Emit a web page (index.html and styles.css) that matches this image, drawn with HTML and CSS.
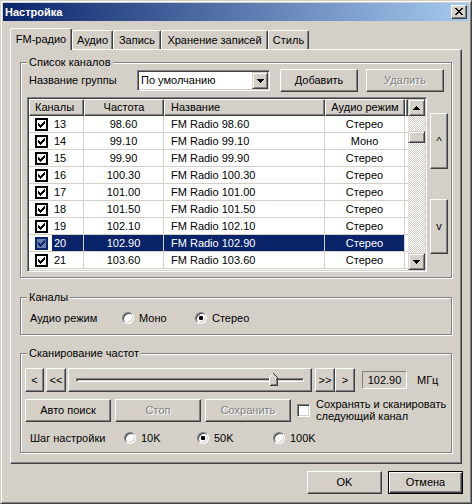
FILE: index.html
```html
<!DOCTYPE html>
<html lang="ru">
<head>
<meta charset="utf-8">
<title>Настройка</title>
<link rel="stylesheet" href="styles.css">
</head>
<body>
<div class="window">
  <div class="titlebar">
    <span class="title">Настройка</span>
    <span class="close"><svg width="8" height="7" viewBox="0 0 8 7" shape-rendering="crispEdges"><path d="M0 0h2v1H0z M6 0h2v1H6z M1 1h2v1H1z M5 1h2v1H5z M2 2h4v1H2z M3 3h2v1H3z M2 4h4v1H2z M1 5h2v1H1z M5 5h2v1H5z M0 6h2v1H0z M6 6h2v1H6z" fill="#000"/></svg></span>
  </div>
  <div class="content">
    <div class="tabs">
      <div class="tab selected t1">FM-радио</div>
      <div class="tab t2">Аудио</div>
      <div class="tab t3">Запись</div>
      <div class="tab t4">Хранение записей</div>
      <div class="tab t5">Стиль</div>
    </div>
    <div class="panel">
      <div class="group g-list">
        <span class="legend">Список каналов</span>
        <div class="row-group">
          <span class="lbl-group">Название группы</span>
          <div class="combo">
            <span class="combo-text">По умолчанию</span>
            <span class="sbb dd"><svg width="7" height="4" viewBox="0 0 7 4" shape-rendering="crispEdges"><path d="M0 0h7v1H6v1H5v1H4v1H3V3H2V2H1V1H0z" fill="#000"/></svg></span>
          </div>
          <button class="btn btn-add">Добавить</button>
          <button class="btn btn-del disabled">Удалить</button>
        </div>
        <div class="list-row">
          <div class="listview">
            <div class="lv-main">
              <div class="lv-head">
                <div class="hc hc-left">Каналы</div>
                <div class="hc hc-center">Частота</div>
                <div class="hc hc-left hc-name">Название</div>
                <div class="hc hc-center">Аудио режим</div>
                <div class="hc hc-fill"></div>
              </div>
              <div class="lv-body">
                <div class="lv-row">
                  <div class="c c-ch"><svg class="cb" width="13" height="13" viewBox="0 0 13 13" shape-rendering="crispEdges"><rect class="cb-frame" width="13" height="13"/><rect class="cb-bg" x="2" y="2" width="9" height="9"/><path class="cb-mark" d="M9 3h1v1H9z M8 4h2v1H8z M3 5h1v1H3z M7 5h3v1H7z M3 6h2v1H3z M6 6h3v1H6z M3 7h5v1H3z M4 8h3v1H4z M5 9h1v1H5z"/></svg><span class="num">13</span></div>
                  <div class="c c-center">98.60</div><div class="c c-name">FM Radio 98.60</div><div class="c c-center">Стерео</div><div class="c c-fill"></div>
                </div>
                <div class="lv-row">
                  <div class="c c-ch"><svg class="cb" width="13" height="13" viewBox="0 0 13 13" shape-rendering="crispEdges"><rect class="cb-frame" width="13" height="13"/><rect class="cb-bg" x="2" y="2" width="9" height="9"/><path class="cb-mark" d="M9 3h1v1H9z M8 4h2v1H8z M3 5h1v1H3z M7 5h3v1H7z M3 6h2v1H3z M6 6h3v1H6z M3 7h5v1H3z M4 8h3v1H4z M5 9h1v1H5z"/></svg><span class="num">14</span></div>
                  <div class="c c-center">99.10</div><div class="c c-name">FM Radio 99.10</div><div class="c c-center">Моно</div><div class="c c-fill"></div>
                </div>
                <div class="lv-row">
                  <div class="c c-ch"><svg class="cb" width="13" height="13" viewBox="0 0 13 13" shape-rendering="crispEdges"><rect class="cb-frame" width="13" height="13"/><rect class="cb-bg" x="2" y="2" width="9" height="9"/><path class="cb-mark" d="M9 3h1v1H9z M8 4h2v1H8z M3 5h1v1H3z M7 5h3v1H7z M3 6h2v1H3z M6 6h3v1H6z M3 7h5v1H3z M4 8h3v1H4z M5 9h1v1H5z"/></svg><span class="num">15</span></div>
                  <div class="c c-center">99.90</div><div class="c c-name">FM Radio 99.90</div><div class="c c-center">Стерео</div><div class="c c-fill"></div>
                </div>
                <div class="lv-row">
                  <div class="c c-ch"><svg class="cb" width="13" height="13" viewBox="0 0 13 13" shape-rendering="crispEdges"><rect class="cb-frame" width="13" height="13"/><rect class="cb-bg" x="2" y="2" width="9" height="9"/><path class="cb-mark" d="M9 3h1v1H9z M8 4h2v1H8z M3 5h1v1H3z M7 5h3v1H7z M3 6h2v1H3z M6 6h3v1H6z M3 7h5v1H3z M4 8h3v1H4z M5 9h1v1H5z"/></svg><span class="num">16</span></div>
                  <div class="c c-center">100.30</div><div class="c c-name">FM Radio 100.30</div><div class="c c-center">Стерео</div><div class="c c-fill"></div>
                </div>
                <div class="lv-row">
                  <div class="c c-ch"><svg class="cb" width="13" height="13" viewBox="0 0 13 13" shape-rendering="crispEdges"><rect class="cb-frame" width="13" height="13"/><rect class="cb-bg" x="2" y="2" width="9" height="9"/><path class="cb-mark" d="M9 3h1v1H9z M8 4h2v1H8z M3 5h1v1H3z M7 5h3v1H7z M3 6h2v1H3z M6 6h3v1H6z M3 7h5v1H3z M4 8h3v1H4z M5 9h1v1H5z"/></svg><span class="num">17</span></div>
                  <div class="c c-center">101.00</div><div class="c c-name">FM Radio 101.00</div><div class="c c-center">Стерео</div><div class="c c-fill"></div>
                </div>
                <div class="lv-row">
                  <div class="c c-ch"><svg class="cb" width="13" height="13" viewBox="0 0 13 13" shape-rendering="crispEdges"><rect class="cb-frame" width="13" height="13"/><rect class="cb-bg" x="2" y="2" width="9" height="9"/><path class="cb-mark" d="M9 3h1v1H9z M8 4h2v1H8z M3 5h1v1H3z M7 5h3v1H7z M3 6h2v1H3z M6 6h3v1H6z M3 7h5v1H3z M4 8h3v1H4z M5 9h1v1H5z"/></svg><span class="num">18</span></div>
                  <div class="c c-center">101.50</div><div class="c c-name">FM Radio 101.50</div><div class="c c-center">Стерео</div><div class="c c-fill"></div>
                </div>
                <div class="lv-row">
                  <div class="c c-ch"><svg class="cb" width="13" height="13" viewBox="0 0 13 13" shape-rendering="crispEdges"><rect class="cb-frame" width="13" height="13"/><rect class="cb-bg" x="2" y="2" width="9" height="9"/><path class="cb-mark" d="M9 3h1v1H9z M8 4h2v1H8z M3 5h1v1H3z M7 5h3v1H7z M3 6h2v1H3z M6 6h3v1H6z M3 7h5v1H3z M4 8h3v1H4z M5 9h1v1H5z"/></svg><span class="num">19</span></div>
                  <div class="c c-center">102.10</div><div class="c c-name">FM Radio 102.10</div><div class="c c-center">Стерео</div><div class="c c-fill"></div>
                </div>
                <div class="lv-row sel">
                  <div class="c c-ch"><svg class="cb" width="13" height="13" viewBox="0 0 13 13" shape-rendering="crispEdges"><rect class="cb-frame" width="13" height="13"/><rect class="cb-bg" x="2" y="2" width="9" height="9"/><path class="cb-mark" d="M9 3h1v1H9z M8 4h2v1H8z M3 5h1v1H3z M7 5h3v1H7z M3 6h2v1H3z M6 6h3v1H6z M3 7h5v1H3z M4 8h3v1H4z M5 9h1v1H5z"/></svg><span class="num">20</span></div>
                  <div class="c c-center">102.90</div><div class="c c-name">FM Radio 102.90</div><div class="c c-center">Стерео</div><div class="c c-fill"></div>
                </div>
                <div class="lv-row">
                  <div class="c c-ch"><svg class="cb" width="13" height="13" viewBox="0 0 13 13" shape-rendering="crispEdges"><rect class="cb-frame" width="13" height="13"/><rect class="cb-bg" x="2" y="2" width="9" height="9"/><path class="cb-mark" d="M9 3h1v1H9z M8 4h2v1H8z M3 5h1v1H3z M7 5h3v1H7z M3 6h2v1H3z M6 6h3v1H6z M3 7h5v1H3z M4 8h3v1H4z M5 9h1v1H5z"/></svg><span class="num">21</span></div>
                  <div class="c c-center">103.60</div><div class="c c-name">FM Radio 103.60</div><div class="c c-center">Стерео</div><div class="c c-fill"></div>
                </div>
              </div>
            </div>
            <div class="vscroll">
              <span class="sbb"><svg width="7" height="4" viewBox="0 0 7 4" shape-rendering="crispEdges"><path d="M3 0h1v1h1v1h1v1h1v1H0V3h1V2h1V1h1z" fill="#000"/></svg></span>
              <div class="sb-track"><span class="sbb thumb"></span></div>
              <span class="sbb"><svg width="7" height="4" viewBox="0 0 7 4" shape-rendering="crispEdges"><path d="M0 0h7v1H6v1H5v1H4v1H3V3H2V2H1V1H0z" fill="#000"/></svg></span>
            </div>
          </div>
          <div class="side-btns">
            <button class="btn side up">^</button>
            <button class="btn side down">v</button>
          </div>
        </div>
      </div>

      <div class="group g-chan">
        <span class="legend">Каналы</span>
        <div class="row-radio">
          <span class="lbl-mode">Аудио режим</span>
          <span class="ritem r-mono"><span class="radio"></span>Моно</span>
          <span class="ritem"><span class="radio on"></span>Стерео</span>
        </div>
      </div>

      <div class="group g-scan">
        <span class="legend">Сканирование частот</span>
        <div class="row-tune">
          <button class="btn sbtn">&lt;</button>
          <button class="btn sbtn b-ll">&lt;&lt;</button>
          <div class="slider">
            <div class="track">
              <svg class="sthumb" style="left:85%" width="9" height="13" viewBox="0 0 9 13" shape-rendering="crispEdges"><path d="M0 12.5V4.5L4.5 0L9 4.5V13H0z" fill="#d4d0c8"/><path d="M0.5 12.5V4.5L4.5 0.5" stroke="#fff" fill="none"/><path d="M4.5 0.5L8.5 4.5V12.5H0.5" stroke="#404040" fill="none"/><path d="M7.5 5V11.5H1.5" stroke="#808080" fill="none"/></svg>
            </div>
          </div>
          <button class="btn sbtn b-rr">&gt;&gt;</button>
          <button class="btn sbtn">&gt;</button>
          <span class="freq">102.90</span>
          <span class="unit">МГц</span>
        </div>
        <div class="row-actions">
          <button class="btn abtn">Авто поиск</button>
          <button class="btn abtn gap disabled">Стоп</button>
          <button class="btn abtn gap disabled">Сохранить</button>
          <span class="chk"></span>
          <span class="chk-text">Сохранять и сканировать<br>следующий канал</span>
        </div>
        <div class="row-step">
          <span class="lbl-step">Шаг настройки</span>
          <span class="ritem r-10"><span class="radio"></span>10K</span>
          <span class="ritem r-50"><span class="radio on"></span>50K</span>
          <span class="ritem"><span class="radio"></span>100K</span>
        </div>
      </div>
    </div>
    <div class="footer">
      <button class="btn fbtn">OK</button>
      <button class="btn fbtn default">Отмена</button>
    </div>
  </div>
</div>
</body>
</html>
```

FILE: styles.css
```css
* { box-sizing: border-box; }
html, body { margin: 0; padding: 0; }
body {
  width: 472px;
  height: 504px;
  overflow: hidden;
  background: #d4d0c8;
  font-family: "Liberation Sans", Arial, sans-serif;
  font-size: 11px;
  line-height: 13px;
  color: #000;
}

.window {
  width: 472px;
  height: 504px;
  border: 1px solid;
  border-color: #d4d0c8 #404040 #404040 #d4d0c8;
  box-shadow: inset 1px 1px #fff, inset -1px -1px #808080;
  padding: 2px;
  display: flex;
  flex-direction: column;
  background: #d4d0c8;
}

.titlebar {
  height: 18px;
  flex: none;
  display: flex;
  align-items: center;
  justify-content: space-between;
  background: linear-gradient(to right, #0a246a, #a6caf0);
}
.title {
  padding-left: 2px;
  color: #fff;
  font-weight: bold;
  line-height: 18px;
}
.close {
  width: 16px;
  height: 14px;
  margin-right: 2px;
  display: flex;
  align-items: center;
  justify-content: center;
  padding: 0 1px 1px 0;
  background: #d4d0c8;
  border: 1px solid;
  border-color: #fff #404040 #404040 #fff;
  box-shadow: inset -1px -1px #808080;
}

.content {
  flex: 1;
  display: flex;
  flex-direction: column;
  padding: 7px 7px 0 7px;
}

/* tabs */
.tabs {
  height: 21px;
  display: flex;
  align-items: flex-end;
  flex: none;
}
.tab {
  height: 19px;
  padding-top: 3px;
  text-align: center;
  border: 1px solid;
  border-bottom: none;
  border-color: #fff #404040 transparent #fff;
  border-radius: 2px 2px 0 0;
  box-shadow: inset -1px 0 #808080;
  background: #d4d0c8;
  white-space: nowrap;
}
.tab.selected {
  height: 22px;
  padding-top: 4px;
  margin-bottom: -1px;
  position: relative;
  z-index: 1;
}
.t1 { width: 62px; }
.t2 { width: 41px; }
.t3 { width: 48px; }
.t4 { width: 107px; }
.t5 { width: 41px; }

.panel {
  height: 415px;
  flex: none;
  border: 1px solid;
  border-color: #fff #404040 #404040 #fff;
  box-shadow: inset -1px -1px #808080;
  padding: 12px 0 0 9px;
  display: flex;
  flex-direction: column;
}

/* group boxes */
.group {
  position: relative;
  width: 432px;
  flex: none;
  border: 1px solid #808080;
  box-shadow: inset 1px 1px #fff, 1px 1px #fff;
}
.legend {
  position: absolute;
  top: -7px;
  left: 6px;
  padding: 0 2px;
  background: #d4d0c8;
  line-height: 13px;
  white-space: nowrap;
}
.g-list { height: 216px; padding-left: 6px; }
.g-chan { height: 38px; margin-top: 19px; padding-left: 9px; }
.g-scan { height: 100px; margin-top: 18px; padding-left: 4px; }

/* buttons */
.btn {
  font: inherit;
  color: #000;
  background: #d4d0c8;
  border: 1px solid;
  border-color: #fff #404040 #404040 #fff;
  box-shadow: inset -1px -1px #808080;
  padding: 0;
  margin: 0;
  border-radius: 0;
  text-align: center;
  white-space: nowrap;
}
.btn.disabled {
  color: #808080;
  text-shadow: 1px 1px #fff;
}
.btn.default {
  border-color: #000;
  box-shadow: inset 1px 1px #fff, inset -1px -1px #404040, inset -2px -2px #808080;
}

.sbb {
  width: 17px;
  height: 17px;
  flex: none;
  display: flex;
  align-items: center;
  justify-content: center;
  background: #d4d0c8;
  border: 1px solid;
  border-color: #d4d0c8 #404040 #404040 #d4d0c8;
  box-shadow: inset 1px 1px #fff, inset -1px -1px #808080;
}

/* group row */
.row-group {
  margin-top: 6px;
  height: 23px;
  display: flex;
  align-items: center;
}
.lbl-group {
  margin-left: 2px;
  width: 108px;
  flex: none;
}
.combo {
  width: 133px;
  height: 21px;
  flex: none;
  display: flex;
  align-items: center;
  padding: 1px;
  background: #fff;
  border: 1px solid;
  border-color: #808080 #fff #fff #808080;
  box-shadow: inset 1px 1px #404040, inset -1px -1px #d4d0c8;
}
.combo-text {
  flex: 1;
  padding-left: 2px;
}
.dd { width: 16px; height: 17px; }
.btn-add { width: 78px; height: 23px; margin-left: 10px; }
.btn-del { width: 78px; height: 23px; margin-left: 8px; }

/* list */
.list-row {
  margin-top: 5px;
  display: flex;
}
.listview {
  width: 400px;
  height: 175px;
  flex: none;
  display: flex;
  padding: 1px;
  background: #fff;
  border: 1px solid;
  border-color: #808080 #fff #fff #808080;
  box-shadow: inset 1px 1px #404040, inset -1px -1px #d4d0c8;
}
.lv-main {
  flex: 1;
  display: flex;
  flex-direction: column;
  overflow: hidden;
}
.lv-head, .lv-row {
  display: grid;
  grid-template-columns: 55px 80px 161px 80px 3px;
  flex: none;
}
.lv-head { height: 17px; }
.hc {
  background: #d4d0c8;
  border: 1px solid;
  border-color: #fff #404040 #404040 #fff;
  box-shadow: inset -1px -1px #808080;
  line-height: 14px;
  white-space: nowrap;
  overflow: hidden;
}
.hc-left { padding-left: 5px; }
.hc-name { padding-left: 6px; }
.hc-center { text-align: center; }
.lv-body {
  flex: 1;
  display: flex;
  flex-direction: column;
  overflow: hidden;
}
.lv-row { height: 17px; }
.c {
  border-right: 1px solid #d4d0c8;
  border-bottom: 1px solid #d4d0c8;
  line-height: 16px;
  white-space: nowrap;
  overflow: hidden;
}
.c-fill { border-right: none; }
.c-center { text-align: center; }
.c-name { padding-left: 7px; }
.c-ch {
  display: flex;
  align-items: center;
  padding-left: 6px;
}
.cb { flex: none; }
.cb-frame { fill: #000; }
.cb-bg { fill: #fff; }
.cb-mark { fill: #000; }
.num {
  flex: 1;
  height: 16px;
  margin-left: 4px;
  padding-left: 2px;
}
.sel .num, .sel .c-center, .sel .c-name {
  background: #0a246a;
  color: #fff;
}
.sel .cb-frame { fill: #0a246a; }
.sel .cb-bg { fill: #6c7fb3; }
.sel .cb-mark { fill: #0a246a; }

.vscroll {
  width: 17px;
  flex: none;
  display: flex;
  flex-direction: column;
}
.sb-track {
  flex: 1;
  display: flex;
  flex-direction: column;
  background: repeating-conic-gradient(#d4d0c8 0 25%, #fff 0 50%) 0 0 / 2px 2px;
}
.thumb {
  height: 12px;
  margin-top: 15px;
}

.side-btns {
  margin-left: 3px;
  width: 18px;
  padding-top: 16px;
  display: flex;
  flex-direction: column;
}
.side { width: 18px; }
.up { height: 56px; }
.down { height: 55px; margin-top: 30px; }

/* channels group */
.row-radio, .row-step {
  height: 14px;
  display: flex;
  align-items: center;
}
.row-radio { margin-top: 13px; }
.lbl-mode { width: 92px; flex: none; }
.ritem {
  display: flex;
  align-items: center;
  gap: 5px;
  flex: none;
}
.r-mono { width: 73px; }
.radio {
  width: 12px;
  height: 12px;
  flex: none;
  border-radius: 50%;
  background: #fff;
  border: 1px solid;
  border-color: #808080 #fff #fff #808080;
  box-shadow: inset 1px 1px #404040, inset -1px -1px #d4d0c8;
}
.radio.on {
  background: radial-gradient(circle at center, #000 0 2px, #fff 2.4px);
}

/* scan group */
.row-tune {
  margin-top: 14px;
  height: 24px;
  display: flex;
  align-items: center;
}
.sbtn { width: 19px; height: 24px; flex: none; }
.b-ll { width: 20px; margin-left: 2px; }
.b-rr { width: 20px; margin-left: 3px; }
.row-tune .sbtn:nth-of-type(4) { width: 20px; }
.slider {
  width: 244px;
  height: 24px;
  flex: none;
  margin-left: 2px;
  display: flex;
  align-items: center;
  padding: 0 7px;
  background: #d4d0c8;
  border: 1px solid;
  border-color: #fff #404040 #404040 #fff;
  box-shadow: inset -1px -1px #808080;
}
.track {
  flex: 1;
  height: 4px;
  position: relative;
  border: 1px solid;
  border-color: #808080 #fff #fff #808080;
  box-shadow: inset 1px 1px #404040, inset -1px -1px #d4d0c8;
}
.sthumb {
  position: absolute;
  top: -6px;
  display: block;
}
.freq {
  width: 45px;
  height: 18px;
  flex: none;
  margin-left: 7px;
  text-align: center;
  line-height: 16px;
  border: 1px solid;
  border-color: #808080 #fff #fff #808080;
}
.unit { margin-left: 10px; }

.row-actions {
  margin-top: 6px;
  height: 24px;
  display: flex;
  align-items: center;
}
.abtn { width: 86px; height: 23px; flex: none; }
.abtn.gap { margin-left: 4px; }
.chk {
  width: 13px;
  height: 13px;
  flex: none;
  margin-left: 6px;
  background: #fff;
  border: 1px solid;
  border-color: #808080 #fff #fff #808080;
  box-shadow: inset 1px 1px #404040, inset -1px -1px #d4d0c8;
}
.chk-text {
  margin-left: 6px;
  line-height: 12px;
  white-space: nowrap;
}

.row-step { margin-top: 9px; }
.lbl-step { width: 94px; margin-left: 5px; flex: none; }
.r-10 { width: 73px; }
.r-50 { width: 76px; }

/* footer */
.footer {
  margin-top: 7px;
  margin-right: -1px;
  display: flex;
  justify-content: flex-end;
  gap: 6px;
}
.fbtn { width: 75px; height: 23px; }
```
